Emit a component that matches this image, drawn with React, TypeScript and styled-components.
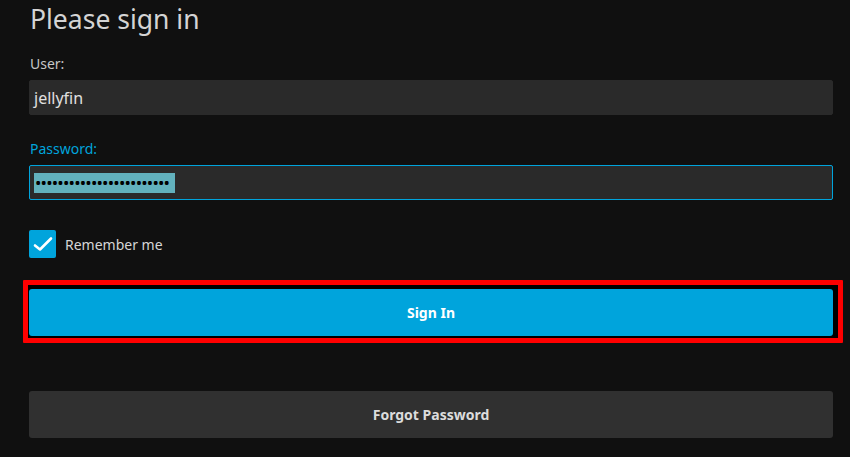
import React from "react";
import styled, { createGlobalStyle } from "styled-components";

const GlobalStyle = createGlobalStyle`
  html, body {
    margin: 0;
    padding: 0;
    background: #101010;
  }
  body {
    font-family: "Noto Sans", "Open Sans", sans-serif;
    color: #dddddd;
  }
`;

const Page = styled.div`
  width: 850px;
  height: 457px;
  box-sizing: border-box;
  padding: 1px 17px 0 29px;
  background: #101010;
  overflow: hidden;
`;

const Title = styled.h1`
  margin: 0;
  padding: 0 0 0 1px;
  font-size: 26.5px;
  line-height: 36px;
  font-weight: 400;
  color: #d4d4d4;
`;

const Field = styled.div<{ $top: number }>`
  display: flex;
  flex-direction: column;
  margin-top: ${(p) => p.$top}px;
`;

const Label = styled.label<{ $active?: boolean }>`
  display: block;
  padding-left: 1px;
  font-size: 14px;
  line-height: 20px;
  height: 20px;
  margin-bottom: 6px;
  color: ${(p) => (p.$active ? "#00a4dc" : "#c6c6c6")};
`;

const InputBox = styled.div<{ $focused?: boolean }>`
  box-sizing: border-box;
  height: 35px;
  border-radius: 2px;
  background: #2a2a2a;
  border: 1px solid ${(p) => (p.$focused ? "#00a4dc" : "#2a2a2a")};
  display: flex;
  align-items: center;
  padding: 0 4px;
  font-size: 16px;
  color: #e0e0e0;
`;

const Selection = styled.span`
  display: inline-block;
  box-sizing: border-box;
  height: 20px;
  line-height: 20px;
  width: 141px;
  padding-left: 1px;
  background: #62b1bd;
  color: #000;
  font-size: 17px;
  letter-spacing: -0.8px;
  white-space: nowrap;
`;

const CheckRow = styled.label`
  display: flex;
  align-items: center;
  gap: 9px;
  margin-top: 30px;
  height: 28px;
  font-size: 14px;
  color: #d6d6d6;
`;

const CheckBox = styled.span`
  width: 27px;
  height: 28px;
  border-radius: 2px;
  background: #00a4dc;
  display: flex;
  align-items: center;
  justify-content: center;
`;

const ButtonWrap = styled.div<{ $top: number }>`
  position: relative;
  margin-top: ${(p) => p.$top}px;
`;

const Highlight = styled.div`
  position: absolute;
  top: -9px;
  left: -6px;
  right: -10px;
  bottom: -7px;
  box-sizing: border-box;
  border: 5px solid #ff0000;
  background: #000;
  border-radius: 1px;
`;

const Button = styled.button<{ $primary?: boolean }>`
  position: relative;
  display: block;
  width: 100%;
  height: 47px;
  border: none;
  border-radius: 3px;
  background: ${(p) => (p.$primary ? "#00a4dc" : "#303030")};
  color: ${(p) => (p.$primary ? "#ffffff" : "#dcdcdc")};
  font-family: "Noto Sans", "Open Sans", sans-serif;
  font-size: 14px;
  font-weight: 700;
  cursor: pointer;
`;

export default function App() {
  return (
    <>
      <GlobalStyle />
      <Page>
        <Title>Please sign in</Title>
        <Field $top={17}>
          <Label>User:</Label>
          <InputBox>jellyfin</InputBox>
        </Field>
        <Field $top={24}>
          <Label $active>Password:</Label>
          <InputBox $focused>
            <Selection>{"\u2022".repeat(24)}</Selection>
          </InputBox>
        </Field>
        <CheckRow>
          <CheckBox>
            <svg width="20" height="16" viewBox="0 0 20 16" fill="none">
              <path
                d="M2 9.5 L7 13.5 L18 2.5"
                stroke="#ffffff"
                strokeWidth="2.6"
                strokeLinecap="round"
                strokeLinejoin="round"
              />
            </svg>
          </CheckBox>
          Remember me
        </CheckRow>
        <ButtonWrap $top={31}>
          <Highlight />
          <Button $primary>Sign In</Button>
        </ButtonWrap>
        <ButtonWrap $top={55}>
          <Button>Forgot Password</Button>
        </ButtonWrap>
      </Page>
    </>
  );
}
